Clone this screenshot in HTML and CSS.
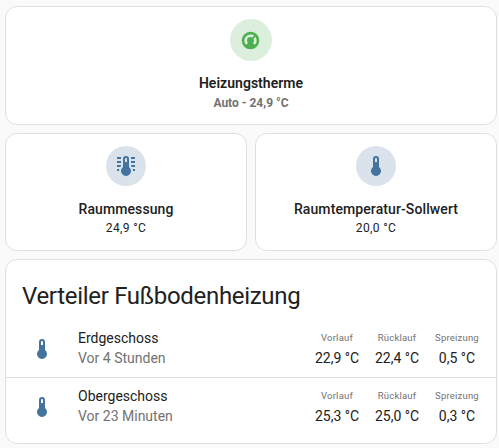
FILE: index.html
```
<!DOCTYPE html>
<html lang="de">
<head>
<meta charset="utf-8">
<title>Heizung</title>
<link rel="stylesheet" href="styles.css">
</head>
<body>
<svg class="defs" aria-hidden="true">
  <symbol id="thermometer" viewBox="0 0 24 24"><path d="M15 13V5A3 3 0 0 0 9 5V13A5 5 0 1 0 15 13M12 4A1 1 0 0 1 13 5V8H11V5A1 1 0 0 1 12 4Z"/></symbol>
</svg>
<main class="dashboard">
  <section class="card tile climate">
    <div class="shape green"><svg viewBox="0 0 24 24"><path d="M16.95,16.95L14.83,14.83C15.55,14.1 16,13.1 16,12C16,11.26 15.79,10.57 15.43,10L17.6,7.81C18.5,9 19,10.43 19,12C19,13.93 18.22,15.68 16.95,16.95M12,5C13.57,5 15,5.5 16.19,6.4L14,8.56C13.43,8.21 12.74,8 12,8A4,4 0 0,0 8,12C8,13.1 8.45,14.1 9.17,14.83L7.05,16.95C5.78,15.68 5,13.93 5,12A7,7 0 0,1 12,5M12,2A10,10 0 0,0 2,12A10,10 0 0,0 12,22A10,10 0 0,0 22,12C22,6.48 17.5,2 12,2Z"/></svg></div>
    <div class="name">Heizungstherme</div>
    <div class="state">Auto - 24,9 °C</div>
  </section>
  <div class="pair">
    <section class="card tile">
      <div class="shape"><svg viewBox="0 0 24 24"><path d="M15 13V5A3 3 0 0 0 9 5V13A5 5 0 1 0 15 13M12 4A1 1 0 0 1 13 5V8H11V5A1 1 0 0 1 12 4ZM17 3H21V5H17ZM17 7H21V9H17ZM17 11H21V13H17.75L17 12.1ZM21 15V17H19A7 7 0 0 0 18.7 15ZM3 3H7V5H3ZM3 7H7V9H3ZM3 11H7V12.1L6.25 13H3ZM3 15H5.3A7 7 0 0 0 5 17H3Z"/></svg></div>
      <div class="name">Raummessung</div>
      <div class="state">24,9 °C</div>
    </section>
    <section class="card tile">
      <div class="shape"><svg><use href="#thermometer"/></svg></div>
      <div class="name">Raumtemperatur-Sollwert</div>
      <div class="state">20,0 °C</div>
    </section>
  </div>
  <section class="card entities">
    <h1>Verteiler Fußbodenheizung</h1>
    <div class="row">
      <svg class="icon"><use href="#thermometer"/></svg>
      <div class="info"><div>Erdgeschoss</div><div class="secondary">Vor 4 Stunden</div></div>
      <div class="entity"><span>Vorlauf</span><div>22,9 °C</div></div>
      <div class="entity"><span>Rücklauf</span><div>22,4 °C</div></div>
      <div class="entity"><span>Spreizung</span><div>0,5 °C</div></div>
    </div>
    <div class="row">
      <svg class="icon"><use href="#thermometer"/></svg>
      <div class="info"><div>Obergeschoss</div><div class="secondary">Vor 23 Minuten</div></div>
      <div class="entity"><span>Vorlauf</span><div>25,3 °C</div></div>
      <div class="entity"><span>Rücklauf</span><div>25,0 °C</div></div>
      <div class="entity"><span>Spreizung</span><div>0,3 °C</div></div>
    </div>
  </section>
</main>
</body>
</html>
```
FILE: styles.css
```
* { box-sizing: border-box; }
body {
  margin: 0;
  background: #fafafa;
  color: #212121;
  font: 14px/20px Roboto, sans-serif;
}
.defs { display: none; }
.dashboard {
  display: flex;
  flex-direction: column;
  gap: 8px;
  width: 492px;
  margin: 6px 0 0 5px;
}
.card {
  background: #fff;
  border: 1px solid #e0e0e0;
  border-radius: 12px;
}
.tile {
  display: flex;
  flex-direction: column;
  align-items: center;
  height: 118px;
  padding-top: 12px;
}
.climate { height: 119px; }
.pair {
  display: grid;
  grid-template-columns: 1fr 1fr;
  gap: 8px;
}
.shape {
  display: grid;
  place-items: center;
  width: 40px;
  height: 40px;
  margin-bottom: 13px;
  border-radius: 50%;
  background: #dae3ec;
  color: #44739e;
}
.shape svg { width: 24px; height: 24px; fill: currentColor; }
.shape.green {
  width: 42px;
  height: 42px;
  margin-bottom: 12px;
  background: #dbefdc;
  color: #4caf50;
}
.green svg { width: 21px; height: 21px; transform: translateX(-1px); }
.name { font-weight: 500; line-height: 20px; letter-spacing: 0.1px; }
.state { font-size: 12px; line-height: 18px; letter-spacing: 0.35px; }
.climate .name { font-weight: 600; letter-spacing: 0.03px; }
.climate .state { color: #727272; font-weight: 700; letter-spacing: 0; line-height: 20px; }
.entities { height: 185px; }
h1 {
  margin: 0;
  padding: 20px 16px 8px;
  font-size: 24px;
  line-height: 32px;
  font-weight: 400;
  letter-spacing: -0.31px;
}
.row {
  display: flex;
  align-items: center;
  height: 57px;
  padding: 0 9px 0 24px;
}
.row + .row { height: 58px; border-top: 1px solid #e0e0e0; }
.icon { width: 24px; height: 24px; fill: #44739e; margin-right: 24px; }
.info { flex: 1; }
.info, .entity { padding-bottom: 2px; }
.secondary { color: #727272; }
.entity { width: 60px; text-align: center; }
.entity span { display: block; font-size: 9.5px; letter-spacing: 0.2px; color: #727272; }
```
